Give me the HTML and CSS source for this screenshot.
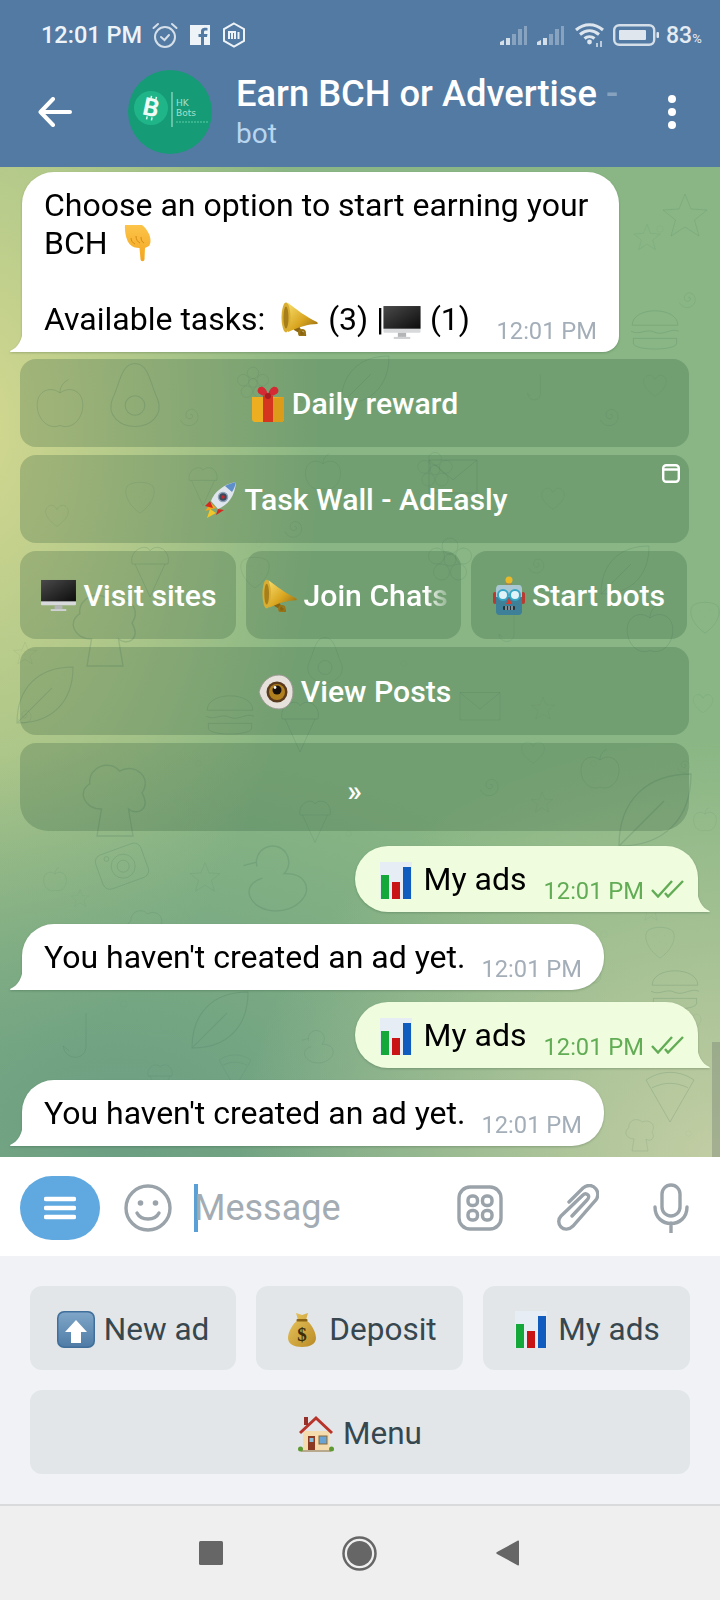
FILE: index.html
```html
<!DOCTYPE html>
<html lang="en">
<head>
<meta charset="utf-8">
<title>Earn BCH or Advertise</title>
<link rel="stylesheet" href="styles.css">
</head>
<body>
<svg class="sprite" aria-hidden="true">
  <defs>
    <linearGradient id="g-gold" x1="0" y1="0" x2="1" y2="1"><stop offset="0" stop-color="#f6dc6a"/><stop offset=".55" stop-color="#d9a520"/><stop offset="1" stop-color="#8a6410"/></linearGradient>
    <linearGradient id="g-screen" x1="0" y1="0" x2="1" y2="1"><stop offset="0" stop-color="#4a4a4a"/><stop offset="1" stop-color="#0c0c0c"/></linearGradient>
    <linearGradient id="g-blue" x1="0" y1="0" x2="0" y2="1"><stop offset="0" stop-color="#7fa6c8"/><stop offset="1" stop-color="#4f7ca6"/></linearGradient>
    <linearGradient id="g-bag" x1="0" y1="0" x2="1" y2="1"><stop offset="0" stop-color="#eac860"/><stop offset="1" stop-color="#b98a26"/></linearGradient>
    <linearGradient id="g-hand" x1="0" y1="0" x2="0" y2="1"><stop offset="0" stop-color="#fcc44a"/><stop offset="1" stop-color="#f3a51e"/></linearGradient>
    <symbol id="e-hand" viewBox="0 0 28 38"><path d="M1 1h17c3 2 5 5 7 9 2 5 2 9 0 12l-4 2-.5 11c0 3-4 3-4 0l-1-11c-4 0-7-1-10-4-3-4-5-11-4.500-19z" fill="url(#g-hand)"/><path d="M7 14c0 3 2 5 4 6M12 12c0 4 2 6 4 7M17 13c0 3 1 5 3 6" stroke="#d58a14" fill="none"/></symbol>
    <symbol id="e-mega" viewBox="0 0 38 34"><path d="M10 10l12 19 4 3c1 3-2 4-4 2-2 0-3-1-3-3l-5-3z" fill="#8a6410"/><path d="M8 1c8 6 18 14 29 19 1 1 1 2 0 2-9 0-18 3-29 8z" fill="url(#g-gold)"/><ellipse cx="6" cy="15.500" rx="4.500" ry="15" fill="#d9ae32"/><ellipse cx="6" cy="15.500" rx="2.500" ry="11" fill="#a67e1a"/><circle cx="22" cy="31" r="3" fill="none" stroke="#9a7414" stroke-width="2"/></symbol>
    <symbol id="e-monitor" viewBox="0 0 38 34"><rect x="1" y="1" width="36" height="26" rx="1" fill="#d7d9db"/><rect x="1" y="1" width="36" height="22" fill="url(#g-screen)"/><rect x="15" y="27" width="8" height="4" fill="#b3b5b7"/><rect x="11" y="31" width="16" height="2" fill="#cfd1d3"/></symbol>
    <symbol id="e-gift" viewBox="0 0 34 36"><path d="M1 11h32v22c0 1-1 3-3 3H4c-2 0-3-2-3-3z" fill="#eeae22"/><path d="M17 13l16-2v22c0 1-1 3-3 3H17z" fill="#dc9c1a"/><rect x="12" y="10" width="10" height="26" fill="#d5351f"/><path d="M17 10C10 10 5 7 7 3s8-3 10 6c2-9 8-10 10-6s-3 7-10 7z" fill="#d42a33"/><circle cx="17" cy="10" r="3" fill="#a81d20"/></symbol>
    <symbol id="e-rocket" viewBox="0 0 36 38"><path d="M3 30l6-8 5 5z" fill="#f3a61c"/><path d="M5 37l3-9 6 4z" fill="#f0c62a"/><path d="M8 20l-5 5 8 2z" fill="#d4281f"/><path d="M16 28l-2 6 8-5z" fill="#d4281f"/><path d="M34 1C22 3 12 11 9 20l7 8c10-4 17-13 18-27z" fill="#dfe5ec"/><path d="M34 1c-4 1-8 2-11 4l7 6c2-3 3-6 4-10z" fill="#5f8fc8"/><circle cx="21" cy="16" r="4.500" fill="#3a4a5c" stroke="#8ea3b8" stroke-width="1.500"/><circle cx="21" cy="16" r="1.800" fill="#c4262c"/></symbol>
    <symbol id="e-robot" viewBox="0 0 32 40"><rect x="13" y="4" width="6" height="6" fill="#9a8a5a"/><circle cx="16" cy="4" r="3.500" fill="#eab92a"/><rect x="0" y="16" width="4" height="12" rx="2" fill="#b83a30"/><rect x="28" y="16" width="4" height="12" rx="2" fill="#b83a30"/><path d="M6 9h20c2 0 3 2 3 4v8H3v-8c0-2 1-4 3-4z" fill="#a9c8d4"/><path d="M3 21h26v15c0 2-2 3-3 3H6c-1 0-3-1-3-3z" fill="#3d8098"/><circle cx="10" cy="19" r="5" fill="#dff3f8" stroke="#37a6c4" stroke-width="2"/><circle cx="22" cy="19" r="5" fill="#dff3f8" stroke="#37a6c4" stroke-width="2"/><path d="M16 22l3 6h-6z" fill="#d83c2e"/><rect x="10" y="30" width="12" height="4" rx="1" fill="#22333c"/><path d="M13 30v4M16 30v4M19 30v4" stroke="#dfe7ea"/></symbol>
    <symbol id="e-eye" viewBox="0 0 36 36"><path d="M1 18C4 7 12 1 21 1c8 0 14 7 14 17s-6 17-14 17C12 35 4 29 1 18z" fill="#e6e2db" stroke="#9a9892"/><circle cx="19" cy="18" r="10.500" fill="#5a3a1c"/><circle cx="19" cy="18" r="8" fill="#b07f1e"/><circle cx="19" cy="16" r="4.500" fill="#17100a"/><circle cx="17" cy="13.500" r="1.400" fill="#fff"/></symbol>
    <symbol id="e-chart" viewBox="0 0 32 37"><rect x="0" y="0" width="32" height="37" fill="#e6edf5"/><rect x="1" y="13" width="8" height="24" fill="#14a83a"/><rect x="12" y="20" width="8" height="17" fill="#c81414"/><rect x="23" y="5" width="8" height="32" fill="#0f5cbe"/></symbol>
    <symbol id="e-up" viewBox="0 0 38 37"><rect x="0" y="0" width="38" height="37" rx="7" fill="#3f6f9a"/><rect x="1.500" y="1.500" width="35" height="34" rx="6" fill="url(#g-blue)"/><path d="M19 9l11 12h-6v11H14V21H8z" fill="#fff"/></symbol>
    <symbol id="e-bag" viewBox="0 0 28 35"><path d="M8 1l6 2 6-2-2 7c5 3 10 12 10 18 0 6-6 9-14 9S0 32 0 26C0 20 5 11 10 8z" fill="url(#g-bag)"/><rect x="8.500" y="7" width="11" height="2.500" rx="1" fill="#8a6414"/><text x="14" y="29" class="bag-sign">$</text></symbol>
    <symbol id="e-house" viewBox="0 0 36 37"><rect x="5" y="16" width="26" height="19" fill="#f4dcae"/><path d="M18 1L1 17l2 2L18 5l15 14 2-2z" fill="#b8342a"/><rect x="6" y="2" width="4" height="8" fill="#96302a"/><rect x="10" y="21" width="7" height="14" fill="#8a3a22"/><rect x="11.500" y="23" width="4" height="4" fill="#8ac0e0"/><rect x="21" y="21" width="8" height="8" fill="#6aa4d4" stroke="#8a6a3a"/><rect x="3" y="35" width="30" height="2" fill="#b9a98c"/><circle cx="2.500" cy="34" r="2.500" fill="#5e9a32"/><circle cx="33.500" cy="34" r="2.500" fill="#5e9a32"/></symbol>

    <symbol id="d-star" viewBox="0 0 100 100"><path d="M50 8L62 38 94 40 69 60 78 92 50 74 22 92 31 60 6 40 38 38Z"/></symbol>
    <symbol id="d-heart" viewBox="0 0 100 100"><path d="M50 88C10 60 5 35 20 22 32 12 45 20 50 32 55 20 68 12 80 22 95 35 90 60 50 88Z"/></symbol>
    <symbol id="d-apple" viewBox="0 0 100 100"><path d="M50 30C35 18 12 25 12 50 12 75 32 92 50 84 68 92 88 75 88 50 88 25 65 18 50 30M50 30C50 20 55 12 64 8"/></symbol>
    <symbol id="d-leaf" viewBox="0 0 100 100"><path d="M10 90C10 40 40 10 90 10 90 60 60 90 10 90ZM10 90L60 40"/></symbol>
    <symbol id="d-spiral" viewBox="0 0 100 100"><path d="M50 50C55 45 60 52 54 58 44 64 36 52 42 42 52 28 72 38 70 58 66 80 36 84 26 62"/></symbol>
    <symbol id="d-flower" viewBox="0 0 100 100"><circle cx="50" cy="50" r="12"/><circle cx="50" cy="22" r="16"/><circle cx="77" cy="42" r="16"/><circle cx="67" cy="74" r="16"/><circle cx="33" cy="74" r="16"/><circle cx="23" cy="42" r="16"/></symbol>
    <symbol id="d-cone" viewBox="0 0 100 100"><path d="M25 40L50 95 75 40M20 40C15 15 45 5 50 18 60 5 85 15 80 40Z"/></symbol>
    <symbol id="d-mail" viewBox="0 0 100 100"><path d="M10 25H90V80H10ZM10 25L50 58 90 25"/></symbol>
    <symbol id="d-camera" viewBox="0 0 100 100"><rect x="10" y="22" width="80" height="60" rx="12" transform="rotate(-20 50 52)"/><circle cx="52" cy="52" r="20"/><circle cx="52" cy="52" r="10"/><circle cx="24" cy="40" r="4"/></symbol>
    <symbol id="d-hook" viewBox="0 0 100 100"><path d="M60 5V60C60 85 25 85 22 60L32 68"/></symbol>
    <symbol id="d-cloud" viewBox="0 0 100 100"><path d="M30 90L35 60C15 60 8 40 22 32 20 12 45 5 55 18 72 8 92 25 80 42 90 60 75 68 65 60L70 90Z"/></symbol>
    <symbol id="d-duck" viewBox="0 0 100 100"><path d="M30 35A18 18 0 1 1 60 43C85 42 90 60 80 72 65 90 30 88 22 68 18 55 30 50 36 48M30 30L15 34"/></symbol>
    <symbol id="d-pizza" viewBox="0 0 100 100"><path d="M50 95L10 25C35 8 65 8 90 25ZM20 38C40 28 60 28 80 38"/></symbol>
    <symbol id="d-burger" viewBox="0 0 100 100"><path d="M12 42C12 10 88 10 88 42ZM10 52C25 60 35 46 50 54 65 60 75 46 90 52M14 64H86V72C86 85 14 85 14 72Z"/></symbol>
    <symbol id="d-avocado" viewBox="0 0 100 100"><path d="M50 5C70 5 72 35 82 55 92 80 70 95 50 95 30 95 8 80 18 55 28 35 30 5 50 5Z"/><circle cx="50" cy="65" r="14"/></symbol>
    <symbol id="d-berry" viewBox="0 0 100 100"><path d="M50 95C20 75 8 45 18 28 30 15 70 15 82 28 92 45 80 75 50 95ZM35 40h1M60 38h1M48 55h1M35 65h1M65 60h1"/></symbol>
    <symbol id="d-ring" viewBox="0 0 100 100"><circle cx="50" cy="50" r="40"/></symbol>
  </defs>
</svg>

<header class="appbar">
  <div class="status">
    <div class="status-left">
      <span class="clock">12:01 PM</span>
      <svg class="st-alarm" width="26" height="26" viewBox="0 0 26 26"><circle cx="13" cy="15" r="10"/><path d="M9 15l3.500 3L17 13M1.500 6L6 2M24.500 6L20 2"/></svg>
      <svg class="st-fb" width="20" height="20" viewBox="0 0 20 20"><path d="M0 0h20v20h-6v-8h3l.5-3H14V7c0-1 .5-1.500 1.500-1.500h2V3c-3-.5-6.500-.5-6.500 3.500V9H8.500v3H11v8H0z"/></svg>
      <svg class="st-mi" width="24" height="26" viewBox="0 0 24 26"><path class="st-hex" d="M12 1.500l10 5.700v11.600l-10 5.700-10-5.700V7.200z"/><path class="st-hex" d="M7 17v-7h6v7M10 11v6M16.500 10v7"/></svg>
    </div>
    <div class="status-right">
      <svg class="st-sig" width="28" height="20" viewBox="0 0 28 20"><path class="sig-on" d="M1 20v-3l4-2v5zM7 20v-7h4v7z"/><path class="sig-off" d="M13 20V9h4v11zM19 20V4h4v16zM25 20V1h3v19z"/></svg>
      <svg class="st-sig" width="28" height="20" viewBox="0 0 28 20"><path class="sig-on" d="M1 20v-3l4-2v5zM7 20v-7h4v7z"/><path class="sig-off" d="M13 20V9h4v11zM19 20V4h4v16zM25 20V1h3v19z"/></svg>
      <svg class="st-wifi" width="30" height="24" viewBox="0 0 30 24"><path d="M1 7c8-7 19-7 27 0M5 11.500c6-5 13-5 19 0M9.500 15.500c3-2.500 7-2.500 10 0"/><circle cx="14.500" cy="19" r="2.400"/><path class="st-wifi-thin" d="M22 20v4M26 18v6"/></svg>
      <svg class="st-batt" width="46" height="22" viewBox="0 0 46 22"><rect class="batt-case" x="1.200" y="1.200" width="40" height="19.600" rx="5"/><rect class="batt-fill" x="6" y="6" width="27" height="10" rx="1"/><rect class="batt-fill" x="43.500" y="8" width="2.500" height="6" rx="1"/></svg>
      <span class="pct">83<small>%</small></span>
    </div>
  </div>
  <div class="titlebar">
    <svg class="back" width="34" height="30" viewBox="0 0 34 30"><path d="M32 15H3M15 2L2.500 15 15 28"/></svg>
    <svg class="avatar" width="84" height="84" viewBox="0 0 84 84">
      <circle cx="42" cy="42" r="42" fill="#169b77"/>
      <circle cx="23" cy="38" r="17" fill="#20b589"/>
      <text x="23" y="46" class="av-b" transform="rotate(12 23 38)">B</text>
      <path d="M21 26v3M26 26v3M21 47v3M26 47v3" stroke="#dff7ec" stroke-width="1.500" transform="rotate(12 23 38)"/>
      <path d="M44 22v35" stroke="#7fd0b6" stroke-width="1.500"/>
      <text x="48" y="36" class="av-t">HK</text>
      <text x="48" y="46" class="av-t">Bots</text>
      <path d="M48 52h33" stroke="#38b58f" stroke-width="2" stroke-dasharray="2 1"/>
    </svg>
    <div class="peer">
      <div class="peer-name">Earn BCH or Advertise <span class="peer-fade">-</span></div>
      <div class="peer-sub">bot</div>
    </div>
    <svg class="more" width="8" height="34" viewBox="0 0 8 34"><circle cx="4" cy="4" r="4"/><circle cx="4" cy="17" r="4"/><circle cx="4" cy="30" r="4"/></svg>
  </div>
</header>

<main class="chat">
  <svg class="doodles" width="720" height="990" viewBox="0 167 720 990" aria-hidden="true">
    <use href="#d-star" x="660" y="190" width="50" height="50"/>
    <use href="#d-star" x="632" y="222" width="30" height="30"/>
    <use href="#d-spiral" x="670" y="280" width="36" height="36"/>
    <use href="#d-burger" x="625" y="300" width="60" height="60"/>
    <use href="#d-ring" x="656" y="225" width="8" height="8"/>
    <use href="#d-apple" x="30" y="370" width="60" height="70"/>
    <use href="#d-avocado" x="100" y="350" width="70" height="90"/>
    <use href="#d-heart" x="42" y="500" width="30" height="30"/>
    <use href="#d-mail" x="410" y="445" width="86" height="60"/>
    <use href="#d-heart" x="538" y="480" width="30" height="36"/>
    <use href="#d-flower" x="425" y="530" width="50" height="60"/>
    <use href="#d-spiral" x="275" y="505" width="38" height="44"/>
    <use href="#d-leaf" x="595" y="530" width="60" height="80"/>
    <use href="#d-cone" x="120" y="530" width="60" height="80"/>
    <use href="#d-cloud" x="60" y="580" width="90" height="100"/>
    <use href="#d-flower" x="415" y="450" width="40" height="40"/>
    <use href="#d-hook" x="490" y="600" width="40" height="60"/>
    <use href="#d-apple" x="620" y="600" width="60" height="60"/>
    <use href="#d-ring" x="20" y="650" width="6" height="6"/>
    <use href="#d-burger" x="200" y="680" width="60" height="70"/>
    <use href="#d-berry" x="685" y="590" width="40" height="50"/>
    <use href="#d-avocado" x="300" y="625" width="50" height="70"/>
    <use href="#d-leaf" x="10" y="650" width="70" height="90"/>
    <use href="#d-cone" x="270" y="680" width="60" height="90"/>
    <use href="#d-mail" x="455" y="680" width="50" height="50"/>
    <use href="#d-heart" x="518" y="735" width="30" height="34"/>
    <use href="#d-apple" x="575" y="740" width="50" height="60"/>
    <use href="#d-spiral" x="670" y="745" width="28" height="40"/>
    <use href="#d-star" x="530" y="790" width="24" height="24"/>
    <use href="#d-cloud" x="70" y="745" width="90" height="110"/>
    <use href="#d-leaf" x="610" y="740" width="90" height="140"/>
    <use href="#d-cone" x="290" y="780" width="50" height="80"/>
    <use href="#d-spiral" x="470" y="760" width="40" height="50"/>
    <use href="#d-camera" x="92" y="835" width="60" height="60"/>
    <use href="#d-star" x="188" y="860" width="34" height="34"/>
    <use href="#d-star" x="70" y="888" width="20" height="20"/>
    <use href="#d-duck" x="230" y="835" width="90" height="90"/>
    <use href="#d-apple" x="40" y="860" width="30" height="40"/>
    <use href="#d-cloud" x="115" y="905" width="60" height="50"/>
    <use href="#d-ring" x="600" y="930" width="8" height="8"/>
    <use href="#d-spiral" x="580" y="960" width="30" height="30"/>
    <use href="#d-burger" x="645" y="960" width="60" height="60"/>
    <use href="#d-leaf" x="170" y="985" width="100" height="70"/>
    <use href="#d-hook" x="50" y="995" width="60" height="90"/>
    <use href="#d-duck" x="295" y="1025" width="45" height="45"/>
    <use href="#d-pizza" x="210" y="1050" width="50" height="40"/>
    <use href="#d-cone" x="140" y="1050" width="40" height="60"/>
    <use href="#d-pizza" x="640" y="1065" width="60" height="60"/>
    <use href="#d-cloud" x="615" y="1115" width="50" height="40"/>
    <use href="#d-ring" x="120" y="1000" width="8" height="8"/>
    <use href="#d-berry" x="640" y="920" width="40" height="40"/>
    <use href="#d-spiral" x="170" y="395" width="40" height="40"/>
    <use href="#d-heart" x="290" y="395" width="24" height="24"/>
    <use href="#d-flower" x="235" y="365" width="36" height="36"/>
    <use href="#d-leaf" x="335" y="350" width="60" height="60"/>
    <use href="#d-hook" x="520" y="365" width="34" height="50"/>
    <use href="#d-spiral" x="590" y="395" width="40" height="40"/>
    <use href="#d-heart" x="640" y="370" width="30" height="30"/>
    <use href="#d-cone" x="180" y="450" width="46" height="70"/>
    <use href="#d-berry" x="120" y="470" width="40" height="50"/>
    <use href="#d-apple" x="300" y="450" width="46" height="46"/>
    <use href="#d-ring" x="255" y="540" width="8" height="8"/>
    <use href="#d-star" x="12" y="640" width="26" height="26"/>
    <use href="#d-spiral" x="520" y="545" width="34" height="38"/>
    <use href="#d-berry" x="235" y="545" width="40" height="50"/>
    <use href="#d-ring" x="400" y="660" width="7" height="7"/>
    <use href="#d-star" x="530" y="695" width="26" height="26"/>
    <use href="#d-heart" x="690" y="690" width="26" height="26"/>
    <use href="#d-ring" x="195" y="760" width="7" height="7"/>
    <use href="#d-ring" x="590" y="760" width="7" height="7"/>
    <use href="#d-spiral" x="10" y="700" width="30" height="30"/>
    <use href="#d-apple" x="690" y="800" width="30" height="40"/>
    <use href="#d-ring" x="345" y="830" width="7" height="7"/>
    <use href="#d-ring" x="30" y="950" width="7" height="7"/>
    <use href="#d-star" x="640" y="900" width="22" height="22"/>
    <use href="#d-heart" x="680" y="1010" width="24" height="24"/>
    <use href="#d-ring" x="280" y="1085" width="7" height="7"/>
    <use href="#d-ring" x="685" y="1130" width="7" height="7"/>
  </svg>

  <section class="messages">
    <article class="bubble bubble-in bubble-tall">
      <p class="bubble-text">Choose an option to start earning your<br>BCH <svg class="emo emo-hand" width="28" height="38"><use href="#e-hand"/></svg><br><br>Available tasks: <svg class="emo emo-mega" width="40" height="34"><use href="#e-mega"/></svg> (3) |<svg class="emo emo-mon" width="42" height="35"><use href="#e-monitor"/></svg> (1)</p>
      <time class="msg-time">12:01 PM</time>
    </article>

    <nav class="inline-kbd">
      <a class="ib"><svg class="ib-emo" width="34" height="36"><use href="#e-gift"/></svg>Daily reward</a>
      <a class="ib">
        <svg class="ib-emo" width="36" height="38"><use href="#e-rocket"/></svg>Task Wall - AdEasly
        <svg class="ib-corner" width="18" height="19" viewBox="0 0 18 19"><rect x="1.200" y="1.200" width="15.600" height="16.600" rx="3"/><path d="M1 5.500h16"/></svg>
      </a>
      <div class="ib-row">
        <a class="ib"><svg class="ib-emo" width="37" height="33"><use href="#e-monitor"/></svg>Visit sites</a>
        <a class="ib"><svg class="ib-emo" width="36" height="33"><use href="#e-mega"/></svg><span class="ib-fade">Join Chats</span></a>
        <a class="ib"><svg class="ib-emo" width="32" height="40"><use href="#e-robot"/></svg>Start bots</a>
      </div>
      <a class="ib"><svg class="ib-emo" width="36" height="36"><use href="#e-eye"/></svg>View Posts</a>
      <a class="ib ib-last"><span class="ib-more">»</span></a>
    </nav>

    <article class="bubble bubble-out">
      <p class="bubble-text"><svg class="emo emo-chart" width="32" height="37"><use href="#e-chart"/></svg> My ads</p>
      <time class="msg-time">12:01 PM</time>
      <svg class="checks" width="33" height="18" viewBox="0 0 33 18"><path d="M1 10l6 6.500L21 1M14 13l3 3.500L32 1"/></svg>
    </article>
    <article class="bubble bubble-in">
      <p class="bubble-text">You haven't created an ad yet.</p>
      <time class="msg-time">12:01 PM</time>
    </article>
    <article class="bubble bubble-out">
      <p class="bubble-text"><svg class="emo emo-chart" width="32" height="37"><use href="#e-chart"/></svg> My ads</p>
      <time class="msg-time">12:01 PM</time>
      <svg class="checks" width="33" height="18" viewBox="0 0 33 18"><path d="M1 10l6 6.500L21 1M14 13l3 3.500L32 1"/></svg>
    </article>
    <article class="bubble bubble-in">
      <p class="bubble-text">You haven't created an ad yet.</p>
      <time class="msg-time">12:01 PM</time>
    </article>
  </section>
  <div class="scroll-thumb"></div>
</main>

<section class="composer">
  <div class="menu-pill"><svg width="32" height="24" viewBox="0 0 32 24"><path d="M2 3h28M2 12h28M2 21h28"/></svg></div>
  <svg class="cp-icon cp-smile" width="48" height="48" viewBox="0 0 48 48"><circle cx="24" cy="24" r="22"/><path d="M13 29c4 8 18 8 22 0"/><circle class="cp-dot" cx="16.500" cy="19" r="2.800"/><circle class="cp-dot" cx="31.500" cy="19" r="2.800"/></svg>
  <div class="cp-field"><span class="caret"></span><span class="placeholder">Message</span></div>
  <svg class="cp-icon cp-stick" width="46" height="46" viewBox="0 0 46 46"><rect x="2" y="2" width="42" height="42" rx="11"/><rect x="11" y="11" width="9.500" height="9.500" rx="4"/><rect x="25.500" y="11" width="9.500" height="9.500" rx="4"/><rect x="11" y="25.500" width="9.500" height="9.500" rx="4"/><rect x="25.500" y="25.500" width="9.500" height="9.500" rx="4"/></svg>
  <svg class="cp-icon cp-clip" width="42" height="48" viewBox="0 0 42 48"><path d="M12 18L26 4c5-4 10-3 13 1s2 9-1 12L16 42c-4 4-9 4-12 1s-3-8 0-11L26 11c2-2 4-1 5 0s1 3-1 5L15 32"/></svg>
  <svg class="cp-icon cp-mic" width="36" height="50" viewBox="0 0 36 50"><rect x="9" y="2" width="18" height="31" rx="9"/><path d="M2 24c0 22 32 22 32 0M18 40v10"/></svg>
</section>

<section class="reply-kbd">
  <div class="rk-row">
    <a class="rk"><svg class="rk-emo" width="38" height="37"><use href="#e-up"/></svg>New ad</a>
    <a class="rk rk-bag"><svg class="rk-emo" width="28" height="35"><use href="#e-bag"/></svg>Deposit</a>
    <a class="rk rk-chart"><svg class="rk-emo" width="32" height="37"><use href="#e-chart"/></svg>My ads</a>
  </div>
  <a class="rk"><svg class="rk-emo" width="36" height="37"><use href="#e-house"/></svg>Menu</a>
</section>

<footer class="navbar">
  <svg width="24" height="24" viewBox="0 0 24 24"><rect width="24" height="24" rx="1.500"/></svg>
  <svg class="nav-home" width="35" height="35" viewBox="0 0 35 35"><circle class="nav-ring" cx="17.500" cy="17.500" r="16"/><circle cx="17.500" cy="17.500" r="12.500"/></svg>
  <svg width="24" height="26" viewBox="0 0 24 26"><path d="M23 1.500c0-1-.6-1.300-1.500-.7L1 12c-1 .6-1 1.400 0 2l20.500 11.200c.9.600 1.500.3 1.500-.7z"/></svg>
</footer>
</body>
</html>
```

FILE: styles.css
```css
* { box-sizing: border-box; }
html, body { margin: 0; padding: 0; }
body {
  width: 720px;
  height: 1600px;
  overflow: hidden;
  display: flex;
  flex-direction: column;
  font-family: Roboto, "Liberation Sans", sans-serif;
  background: #f0f2f5;
}
.sprite { width: 0; height: 0; display: block; }
.bag-sign { font: 700 19px "Liberation Serif", serif; text-anchor: middle; fill: #3c2c08; }

/* App bar */
.appbar { height: 167px; flex: none; background: #527aa2; color: #fff; }
.status { height: 60px; padding: 10px 20px 0 41px; display: flex; justify-content: space-between; align-items: center; }
.status-left { display: flex; align-items: center; }
.clock { font-size: 23.500px; font-weight: 500; color: #eef3f8; width: 111px; }
.st-alarm { fill: none; stroke: #d5dfe9; stroke-width: 2; stroke-linecap: round; }
.st-fb { margin-left: 12px; fill: #eef3f8; }
.st-mi { margin-left: 12px; }
.st-hex { fill: none; stroke: #eef3f8; stroke-width: 2; }
.status-right { display: flex; align-items: center; }
.st-sig { margin-right: 9px; }
.sig-on { fill: #d5dfe9; }
.sig-off { fill: #87a3bf; }
.st-wifi { fill: none; stroke: #dde6ee; stroke-width: 3; margin-left: 2px; margin-right: 8px; }
.st-wifi circle { fill: #dde6ee; stroke: none; }
.st-wifi-thin { stroke-width: 1.500; }
.batt-case { fill: none; stroke: #d5dfe9; stroke-width: 2.400; }
.batt-fill { fill: #dfe6ed; }
.pct { font-size: 23px; font-weight: 500; color: #e4ebf2; margin-left: 7px; width: 34px; white-space: nowrap; }
.pct small { font-size: 13px; font-weight: 400; }

.titlebar { height: 107px; display: flex; align-items: center; padding-bottom: 3px; }
.back { margin-left: 38px; flex: none; fill: none; stroke: #fff; stroke-width: 4; stroke-linecap: round; stroke-linejoin: round; }
.avatar { margin-left: 56px; flex: none; }
.av-b { font: 700 25px Roboto, sans-serif; fill: #f0fbf6; text-anchor: middle; }
.av-t { font: 400 9px "DejaVu Sans", sans-serif; fill: #a5e0cb; }
.peer { margin: 0 0 2px 24px; width: 432px; }
.peer-name { font-size: 36.300px; font-weight: 500; line-height: 46px; white-space: nowrap; }
.peer-fade { color: #fff; opacity: .3; }
.peer-sub { font-size: 28px; line-height: 34px; color: #b9d6f0; }
.more { fill: #fff; flex: none; }

/* Chat */
.chat {
  position: relative;
  height: 990px;
  flex: none;
  overflow: hidden;
  background:
    radial-gradient(480px 420px at 720px 990px, #c2cda4 0%, rgba(194,205,164,0) 100%),
    radial-gradient(560px 380px at 120px 960px, #6b9e82 0%, rgba(107,158,130,0) 100%),
    radial-gradient(340px 640px at -20px 260px, #d3d88f 0%, rgba(211,216,143,0) 100%),
    #89b684;
}
.doodles {
  position: absolute;
  left: 0;
  top: 0;
  fill: none;
  stroke: #4a7a60;
  stroke-opacity: .24;
  stroke-width: 1.500;
}
.doodles * { vector-effect: non-scaling-stroke; }
.messages { position: relative; display: flex; flex-direction: column; padding-top: 5px; }
.scroll-thumb { position: absolute; right: 0; bottom: 0; width: 8px; height: 115px; background: rgba(110, 120, 110, .35); }

.bubble { position: relative; display: flex; align-items: flex-end; height: 66px; flex: none; filter: drop-shadow(0 1px 1px rgba(30, 60, 40, .25)); }
.bubble::before { content: ""; position: absolute; bottom: 0; width: 14px; height: 24px; }
.bubble-text { margin: 0; font-size: 32px; line-height: 38px; color: #000; align-self: flex-start; padding-top: 14px; white-space: nowrap; }
.msg-time { font-size: 23.700px; line-height: 28px; margin-bottom: 7px; white-space: nowrap; }

.bubble-in {
  align-self: flex-start;
  margin: 12px 0 0 22px;
  padding: 0 22px;
  gap: 16px;
  background: #fff;
  border-radius: 32px 32px 32px 0;
}
.bubble-in::before {
  left: -12px;
  background: #fff;
  clip-path: path("M13 0C13 11 8 20 0 23 0 23.500 .5 24 1 24H14V0Z");
}
.bubble-in .msg-time { color: #a4aeb8; }

.bubble-tall {
  height: 180px;
  width: 597px;
  margin-top: 0;
  display: grid;
  padding: 0 22px;
  border-radius: 32px 32px 16px 0;
}
.bubble-tall .bubble-text, .bubble-tall .msg-time { grid-area: 1 / 1; }
.bubble-tall .msg-time { justify-self: end; align-self: end; }

.bubble-out {
  align-self: flex-end;
  margin: 15px 22px 0 0;
  padding: 0 14px 0 25px;
  background: #effdde;
  border-radius: 33px 32px 0 33px;
}
.bubble-out::before {
  right: -12px;
  background: #effdde;
  clip-path: path("M1 0C1 11 6 20 13.500 23 14 23.500 13.500 24 13 24H0V0Z");
}
.bubble-out .bubble-text { margin-right: 17px; }
.bubble-out .msg-time { color: #62ac55; margin-right: 7px; }
.bubble-out ~ .bubble-out { margin-top: 12px; }
.checks { fill: none; stroke: #62ac55; stroke-width: 2.400; margin-bottom: 14px; flex: none; }

.emo { vertical-align: middle; }
.emo-hand { margin: -12px 0 -4px 8px; vertical-align: -4px; }
.emo-mega { margin: -6px 1px 0 6px; }
.emo-mon { margin: -8px -1px -4px -3px; vertical-align: -6px; }
.emo-chart { margin: -10px 4px -3px 0; vertical-align: -5.500px; }

/* Inline keyboard */
.inline-kbd { display: flex; flex-direction: column; gap: 8px; margin: 7px 0 0 20px; width: 669px; }
.ib {
  position: relative;
  height: 88px;
  display: flex;
  align-items: center;
  justify-content: center;
  gap: 7px;
  padding-top: 1px;
  background: rgba(52, 92, 62, .26);
  border-radius: 16px;
  color: #fff;
  font-size: 30.200px;
  font-weight: 500;
  white-space: nowrap;
  overflow: hidden;
}
.ib-last { border-radius: 16px 16px 28px 28px; }
.ib-more { font-weight: 500; font-size: 30px; padding-top: 6px; }
.ib-row { display: grid; grid-template-columns: 216px 215px 216px; gap: 10px; width: 667px; }
.ib-corner { position: absolute; right: 9px; top: 9px; fill: none; stroke: #fff; stroke-width: 2.400; }
.ib-fade { display: inline-block; width: 143px; overflow: hidden; -webkit-mask-image: linear-gradient(90deg, #000 85%, rgba(0, 0, 0, .25) 100%); mask-image: linear-gradient(90deg, #000 85%, rgba(0, 0, 0, .25) 100%); }

/* Composer */
.composer { height: 99px; flex: none; background: #fff; display: flex; align-items: center; padding: 2px 0 0 20px; }
.menu-pill { width: 80px; height: 64px; border-radius: 32px; background: #5fa8e0; display: flex; align-items: center; justify-content: center; }
.menu-pill svg { fill: none; stroke: #fff; stroke-width: 4.500; stroke-linecap: round; }
.cp-icon { flex: none; fill: none; stroke: #9aa3a9; stroke-width: 3.400; stroke-linecap: round; }
.cp-dot { fill: #9aa3a9; stroke: none; }
.cp-smile { margin-left: 24px; }
.cp-field { margin-left: 22px; width: 263px; height: 48px; display: flex; align-items: center; }
.caret { width: 4px; height: 48px; background: #5b9fd8; flex: none; }
.placeholder { font-size: 36px; color: #a4acb3; margin-left: -4px; }
.cp-clip { margin-left: 54px; }
.cp-mic { margin-left: 54px; }

/* Reply keyboard */
.reply-kbd { height: 248px; flex: none; padding: 30px 30px 0; display: flex; flex-direction: column; gap: 20px; background: #f0f2f5; }
.rk-row { display: grid; grid-template-columns: 206px 207px 207px; gap: 20px; }
.rk {
  height: 84px;
  display: flex;
  align-items: center;
  justify-content: center;
  gap: 9px;
  padding-top: 2px;
  background: #e2e6e9;
  border-radius: 12px;
  color: #36474f;
  font-size: 31.500px;
  white-space: nowrap;
}
.rk-bag { gap: 13px; padding-left: 6px; }
.rk-chart { gap: 11px; padding-left: 2px; }

/* Nav bar */
.navbar {
  height: 96px;
  flex: none;
  display: flex;
  align-items: center;
  justify-content: center;
  gap: 119px;
  padding: 0 2px 0 0;
  background: #efefef;
  border-top: 2px solid #d9dadc;
}
.navbar svg { fill: #666; }
.nav-ring { fill: none; stroke: #666; stroke-width: 2.500; }
```
